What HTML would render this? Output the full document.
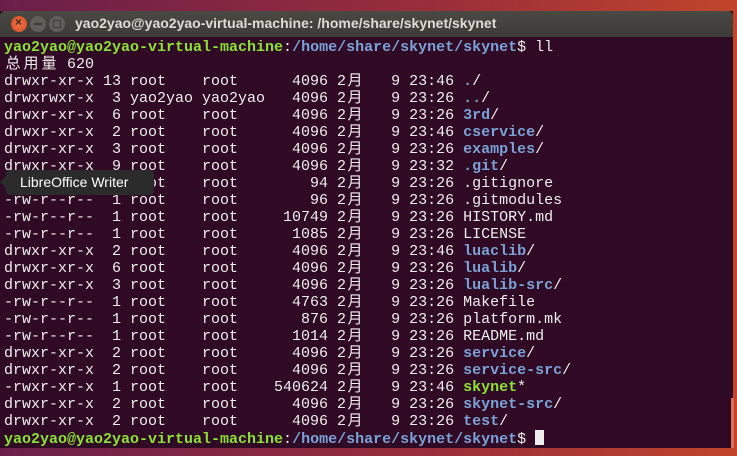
<!DOCTYPE html>
<html><head><meta charset="utf-8"><style>
html,body{margin:0;padding:0;width:737px;height:456px;overflow:hidden;background:linear-gradient(90deg,#6a1f4a,#9a2e3a 60%,#c0452a);}
.win{position:absolute;left:0;top:11px;width:733px;height:437px;background:#300a24;}
.tb{position:absolute;left:0;top:0;width:733px;height:26px;background:linear-gradient(#4a4944,#3c3b37);border-radius:5px 5px 0 0;}
.btn{position:absolute;top:5px;width:16px;height:16px;border-radius:50%;}
.title{position:absolute;left:75px;top:4px;font:bold 14px "Liberation Sans",sans-serif;color:#dfdbd2;white-space:pre;}
.term{position:absolute;left:4px;top:28px;font:15px/17px "Liberation Mono","Noto Sans CJK SC",monospace;color:#eeeeec;white-space:pre;}
.c{display:inline-block;width:18px;text-align:center;}
.g{color:#8ae234;font-weight:bold}.b{color:#7aa2d6;font-weight:bold}
.cur{display:inline-block;width:9px;height:15px;background:#eeeeec;vertical-align:-2px}
.tip{position:absolute;left:6px;top:170px;width:148px;height:25px;background:#2b2b2b;border-radius:4px;color:#fff;font:14px/25px "Liberation Sans",sans-serif;text-indent:14px;}
.tip:before{content:"";position:absolute;left:-6px;top:6px;border:6px solid transparent;border-left:0;border-right-color:#2b2b2b;}
.sb{position:absolute;left:731px;top:398px;width:3px;height:50px;background:#e07050;}
</style></head><body>
<div class="win">
<div class="tb">
<div class="btn" style="left:11px;background:radial-gradient(#f2764a,#d4461c);"><span style="position:absolute;left:4px;top:-1px;font:bold 12px sans-serif;color:#3c2a20">×</span></div>
<div class="btn" style="left:30px;background:#5f5e5a;"><span style="position:absolute;left:4px;top:7px;width:8px;height:2px;background:#3c3b37"></span></div>
<div class="btn" style="left:49px;background:#5f5e5a;"><span style="position:absolute;left:4px;top:4px;width:6px;height:6px;border:1px solid #3c3b37"></span></div>
<div class="title">yao2yao@yao2yao-virtual-machine: /home/share/skynet/skynet</div>
</div>
<div class="term"><span class="g">yao2yao@yao2yao-virtual-machine</span>:<span class="b">/home/share/skynet/skynet</span>$ ll
<span class="c">总</span><span class="c">用</span><span class="c">量</span> 620
drwxr-xr-x 13 root    root      4096 2<span class="c">月</span>   9 23:46 <span class="b">.</span>/
drwxrwxr-x  3 yao2yao yao2yao   4096 2<span class="c">月</span>   9 23:26 <span class="b">..</span>/
drwxr-xr-x  6 root    root      4096 2<span class="c">月</span>   9 23:26 <span class="b">3rd</span>/
drwxr-xr-x  2 root    root      4096 2<span class="c">月</span>   9 23:46 <span class="b">cservice</span>/
drwxr-xr-x  3 root    root      4096 2<span class="c">月</span>   9 23:26 <span class="b">examples</span>/
drwxr-xr-x  9 root    root      4096 2<span class="c">月</span>   9 23:32 <span class="b">.git</span>/
-rw-r--r--  1 root    root        94 2<span class="c">月</span>   9 23:26 .gitignore
-rw-r--r--  1 root    root        96 2<span class="c">月</span>   9 23:26 .gitmodules
-rw-r--r--  1 root    root     10749 2<span class="c">月</span>   9 23:26 HISTORY.md
-rw-r--r--  1 root    root      1085 2<span class="c">月</span>   9 23:26 LICENSE
drwxr-xr-x  2 root    root      4096 2<span class="c">月</span>   9 23:46 <span class="b">luaclib</span>/
drwxr-xr-x  6 root    root      4096 2<span class="c">月</span>   9 23:26 <span class="b">lualib</span>/
drwxr-xr-x  3 root    root      4096 2<span class="c">月</span>   9 23:26 <span class="b">lualib-src</span>/
-rw-r--r--  1 root    root      4763 2<span class="c">月</span>   9 23:26 Makefile
-rw-r--r--  1 root    root       876 2<span class="c">月</span>   9 23:26 platform.mk
-rw-r--r--  1 root    root      1014 2<span class="c">月</span>   9 23:26 README.md
drwxr-xr-x  2 root    root      4096 2<span class="c">月</span>   9 23:26 <span class="b">service</span>/
drwxr-xr-x  2 root    root      4096 2<span class="c">月</span>   9 23:26 <span class="b">service-src</span>/
-rwxr-xr-x  1 root    root    540624 2<span class="c">月</span>   9 23:46 <span class="g">skynet</span>*
drwxr-xr-x  2 root    root      4096 2<span class="c">月</span>   9 23:26 <span class="b">skynet-src</span>/
drwxr-xr-x  2 root    root      4096 2<span class="c">月</span>   9 23:26 <span class="b">test</span>/
<span class="g">yao2yao@yao2yao-virtual-machine</span>:<span class="b">/home/share/skynet/skynet</span>$ <span class="cur"></span></div>
</div>
<div class="tip">LibreOffice Writer</div>
<div class="sb"></div>
</body></html>
